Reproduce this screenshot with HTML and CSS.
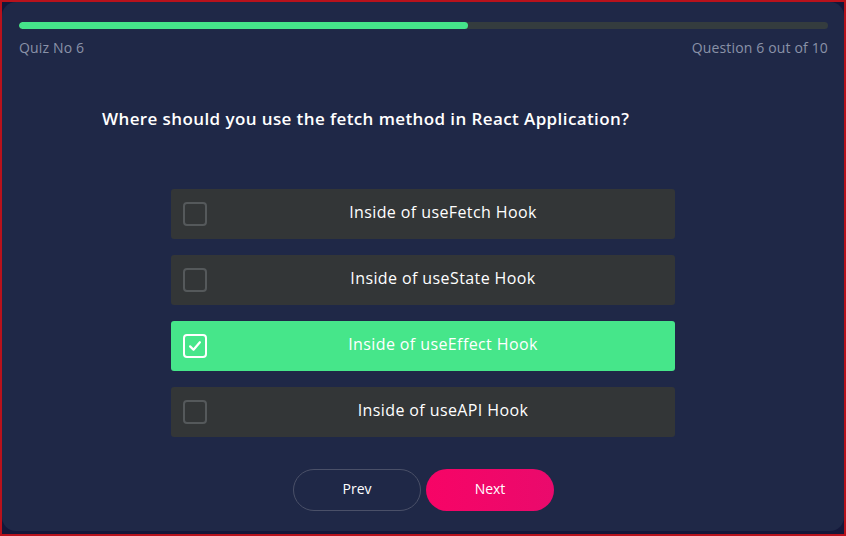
FILE: index.html
```html
<!DOCTYPE html>
<html>
<head>
<meta charset="utf-8">
<link rel="stylesheet" href="styles.css">
</head>
<body>
<div class="frame">
  <div class="card">
    <div class="progress"><div class="progress-fill" style="width:55.5%"></div></div>
    <div class="meta">
      <span>Quiz No 6</span>
      <span>Question 6 out of 10</span>
    </div>
    <h1 class="question">Where should you use the fetch method in React Application?</h1>
    <div class="options">
      <div class="option"><span class="box"></span><span class="label">Inside of useFetch Hook</span></div>
      <div class="option"><span class="box"></span><span class="label">Inside of useState Hook</span></div>
      <div class="option selected"><span class="box"><svg viewBox="0 0 24 24" width="18" height="18"><path d="M5.5 12.5l4.5 4.5 8.5-10" fill="none" stroke="#fff" stroke-width="3" stroke-linecap="round" stroke-linejoin="round"/></svg></span><span class="label">Inside of useEffect Hook</span></div>
      <div class="option"><span class="box"></span><span class="label">Inside of useAPI Hook</span></div>
    </div>
    <div class="buttons">
      <button class="btn prev">Prev</button>
      <button class="btn next">Next</button>
    </div>
  </div>
</div>
</body>
</html>
```
FILE: styles.css
```css
* { box-sizing: border-box; }
html, body { margin: 0; padding: 0; }
body {
  width: 846px;
  height: 536px;
  background: #14183a;
  font-family: "Open Sans", "Noto Sans", sans-serif;
}
.frame {
  width: 846px;
  height: 536px;
  border: 2px solid #b8121c;
  background: #14183a;
  padding: 0 0 3px 0;
}
.card {
  height: 100%;
  background: #1f2847;
  border-radius: 14px;
  padding: 20px 16px 0 17px;
  display: flex;
  flex-direction: column;
}
.progress {
  height: 7px;
  background: #343c3e;
  border-radius: 4px;
  overflow: hidden;
}
.progress-fill {
  height: 100%;
  background: #45e38a;
  border-radius: 4px;
}
.meta {
  display: flex;
  justify-content: space-between;
  margin-top: 10px;
  font-size: 14px;
  font-weight: 500;
  letter-spacing: 0.15px;
  color: #8a92a8;
  line-height: 18px;
}
.question {
  margin: 50px 0 0 83px;
  font-size: 17px;
  font-weight: 600;
  letter-spacing: 0.4px;
  color: #ffffff;
  line-height: 24px;
}
.options {
  margin: 58px 0 0 152px;
  width: 504px;
  display: flex;
  flex-direction: column;
  gap: 16px;
}
.option {
  height: 50px;
  background: #333637;
  border-radius: 3px;
  display: flex;
  align-items: center;
  padding-left: 12px;
}
.option.selected { background: #46e68a; }
.box {
  width: 24px;
  height: 24px;
  border: 2px solid #55595b;
  border-radius: 4px;
  display: flex;
  align-items: center;
  justify-content: center;
  flex-shrink: 0;
}
.option.selected .box { border-color: #ffffff; }
.label {
  flex: 1;
  text-align: center;
  color: #ffffff;
  font-size: 16px;
  font-weight: 500;
  letter-spacing: 0.4px;
  margin-left: 4px;
  padding-bottom: 4px;
}
.buttons {
  margin-top: 32px;
  display: flex;
  justify-content: center;
  gap: 5px;
}
.btn {
  width: 128px;
  height: 42px;
  border-radius: 21px;
  font-family: "Open Sans", "Noto Sans", sans-serif;
  font-size: 14px;
  font-weight: 500;
  color: #ffffff;
  cursor: pointer;
  padding: 0 0 4px 0;
}
.prev {
  background: transparent;
  border: 1px solid #4a5068;
}
.next {
  background: linear-gradient(90deg, #f70466, #ea0a6c);
  border: none;
}
```
